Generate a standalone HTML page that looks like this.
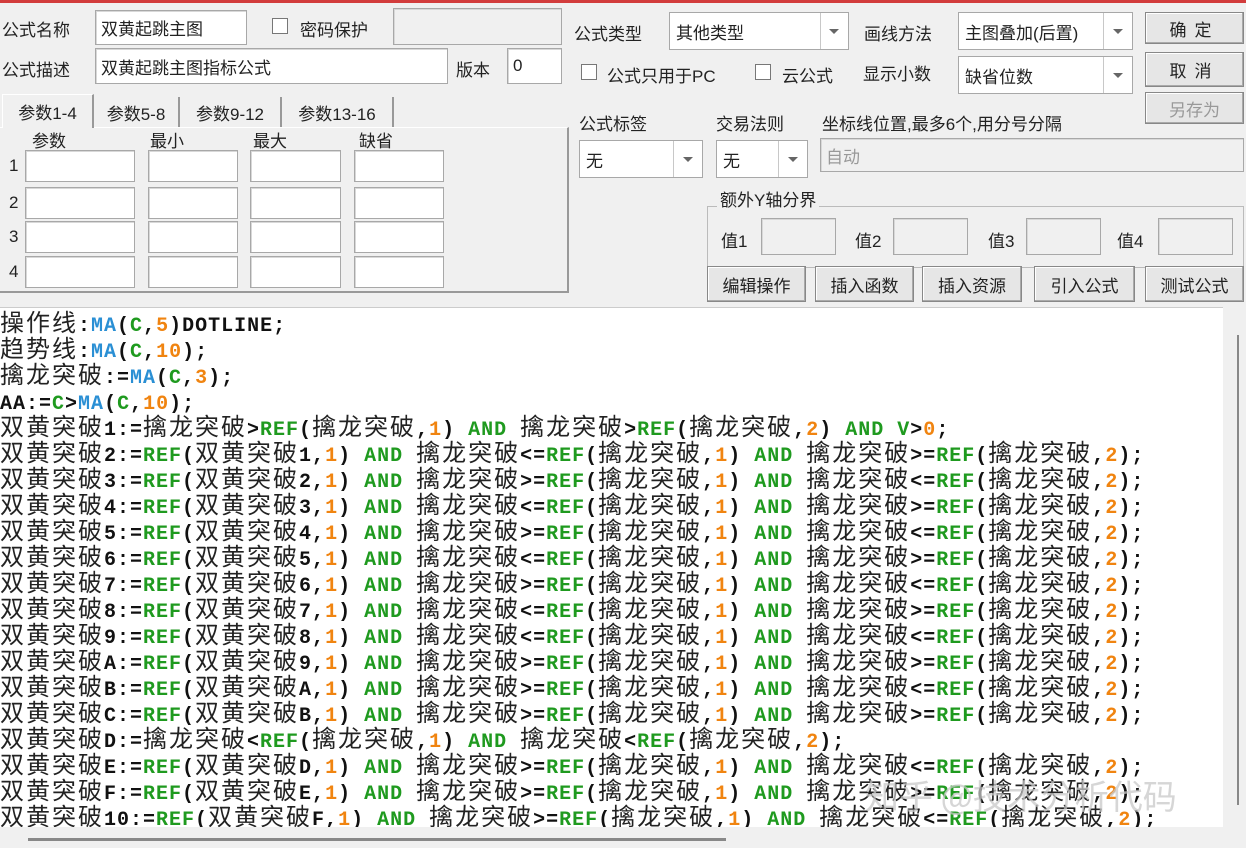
<!DOCTYPE html>
<html><head><meta charset="utf-8"><style>
*{margin:0;padding:0;box-sizing:border-box}
body{width:1246px;height:848px;background:#f0f0f0;position:relative;overflow:hidden;font-family:"Liberation Sans","Noto Sans CJK SC",sans-serif;font-size:17px;color:#222}
.a{position:absolute;white-space:nowrap}
.in{position:absolute;background:#fff;border:1px solid #a8a8a8;box-shadow:inset 1px 1px 0 #d8d8d8;padding-left:5px;line-height:normal;display:flex;align-items:center}
.dis{background:#f0f0f0;color:#999}
.cb{position:absolute;width:16px;height:16px;border:1px solid #777;background:#fff}
.combo{position:absolute;background:#fff;border:1px solid #a8a8a8;display:flex;align-items:center;padding-left:6px}
.combo .sep{position:absolute;top:0;bottom:0;border-left:1px solid #c8c8c8}
.combo .arr{position:absolute;width:0;height:0;border-left:5px solid transparent;border-right:5px solid transparent;border-top:5px solid #666;top:50%;margin-top:-2px}
.btn{position:absolute;background:#e6e6e6;border:1px solid #888;box-shadow:inset -1px -1px 0 #aaa,inset 1px 1px 0 #fff;display:flex;align-items:center;justify-content:center}
.tab{position:absolute;border-right:2px solid #999;height:30px;display:flex;align-items:center;justify-content:center}
#code{position:absolute;left:0;top:307px;width:1223px;height:520px;background:#fff;overflow:hidden;border-top:1px solid #ccc}
.l{height:26px;line-height:26px;white-space:pre;font-family:"Liberation Mono",monospace;font-weight:bold;font-size:20px;letter-spacing:1px;color:#111}
i{font-style:normal;font-family:"Noto Sans CJK SC","WenQuanYi Zen Hei",sans-serif;font-size:24px;font-weight:normal;letter-spacing:2px;color:#222;line-height:26px}
g{color:#1f9a1f}m{color:#2a8fd4}o{color:#f08410}
</style></head><body>
<div class="a" style="left:0;top:0;width:1246px;height:3px;background:#d23c3c"></div>

<div class="a" style="left:2px;top:16px">公式名称</div>
<div class="in" style="left:95px;top:10px;width:152px;height:35px">双黄起跳主图</div>
<div class="cb" style="left:272px;top:18px"></div>
<div class="a" style="left:300px;top:16px">密码保护</div>
<div class="in dis" style="left:393px;top:8px;width:169px;height:37px"></div>
<div class="a" style="left:2px;top:56px">公式描述</div>
<div class="in" style="left:95px;top:48px;width:353px;height:36px">双黄起跳主图指标公式</div>
<div class="a" style="left:456px;top:56px">版本</div>
<div class="in" style="left:507px;top:48px;width:55px;height:36px">0</div>

<div class="a" style="left:0;top:127px;width:569px;height:166px;border-right:2px solid #999;border-bottom:2px solid #999;border-top:1px solid #fff"></div>
<div class="tab" style="left:2px;top:94px;width:92px;height:34px;background:#f0f0f0;border-left:1px solid #fff;border-top:1px solid #fff">参数1-4</div>
<div class="tab" style="left:94px;top:97px;width:86px">参数5-8</div>
<div class="tab" style="left:180px;top:97px;width:102px">参数9-12</div>
<div class="tab" style="left:282px;top:97px;width:112px">参数13-16</div>
<div class="a" style="left:32px;top:127px">参数</div>
<div class="a" style="left:150px;top:127px">最小</div>
<div class="a" style="left:253px;top:127px">最大</div>
<div class="a" style="left:359px;top:127px">缺省</div>
<div class="a" style="left:9px;top:156px">1</div><div class="a" style="left:9px;top:193px">2</div><div class="a" style="left:9px;top:227px">3</div><div class="a" style="left:9px;top:262px">4</div>
<div class="in" style="left:25px;top:150px;width:110px;height:32px"></div><div class="in" style="left:148px;top:150px;width:90px;height:32px"></div><div class="in" style="left:250px;top:150px;width:91px;height:32px"></div><div class="in" style="left:354px;top:150px;width:90px;height:32px"></div>
<div class="in" style="left:25px;top:187px;width:110px;height:32px"></div><div class="in" style="left:148px;top:187px;width:90px;height:32px"></div><div class="in" style="left:250px;top:187px;width:91px;height:32px"></div><div class="in" style="left:354px;top:187px;width:90px;height:32px"></div>
<div class="in" style="left:25px;top:221px;width:110px;height:32px"></div><div class="in" style="left:148px;top:221px;width:90px;height:32px"></div><div class="in" style="left:250px;top:221px;width:91px;height:32px"></div><div class="in" style="left:354px;top:221px;width:90px;height:32px"></div>
<div class="in" style="left:25px;top:256px;width:110px;height:32px"></div><div class="in" style="left:148px;top:256px;width:90px;height:32px"></div><div class="in" style="left:250px;top:256px;width:91px;height:32px"></div><div class="in" style="left:354px;top:256px;width:90px;height:32px"></div>

<div class="a" style="left:574px;top:20px">公式类型</div>
<div class="combo" style="left:669px;top:12px;width:180px;height:38px">其他类型<span class="sep" style="left:150px"></span><span class="arr" style="left:159px"></span></div>
<div class="a" style="left:864px;top:20px">画线方法</div>
<div class="combo" style="left:958px;top:12px;width:175px;height:38px">主图叠加(后置)<span class="sep" style="left:144px"></span><span class="arr" style="left:154px"></span></div>
<div class="btn" style="left:1145px;top:12px;width:99px;height:32px;letter-spacing:8px">确定</div>
<div class="btn" style="left:1145px;top:52px;width:99px;height:35px;letter-spacing:8px">取消</div>
<div class="btn" style="left:1145px;top:92px;width:99px;height:32px;color:#999">另存为</div>
<div class="cb" style="left:581px;top:64px"></div>
<div class="a" style="left:607px;top:62px">公式只用于PC</div>
<div class="cb" style="left:755px;top:64px"></div>
<div class="a" style="left:782px;top:62px">云公式</div>
<div class="a" style="left:863px;top:60px">显示小数</div>
<div class="combo" style="left:958px;top:56px;width:175px;height:38px">缺省位数<span class="sep" style="left:144px"></span><span class="arr" style="left:154px"></span></div>
<div class="a" style="left:579px;top:110px">公式标签</div>
<div class="a" style="left:716px;top:110px">交易法则</div>
<div class="a" style="left:822px;top:110px">坐标线位置,最多6个,用分号分隔</div>
<div class="combo" style="left:579px;top:140px;width:124px;height:38px">无<span class="sep" style="left:93px"></span><span class="arr" style="left:103px"></span></div>
<div class="combo" style="left:716px;top:140px;width:92px;height:38px">无<span class="sep" style="left:61px"></span><span class="arr" style="left:71px"></span></div>
<div class="in dis" style="left:820px;top:138px;width:424px;height:34px">自动</div>
<div class="a" style="left:707px;top:206px;width:537px;height:62px;border:1px solid #bbb"></div>
<div class="a" style="left:717px;top:186px;background:#f0f0f0;padding:0 3px">额外Y轴分界</div>
<div class="a" style="left:721px;top:227px">值1</div><div class="in dis" style="left:761px;top:218px;width:75px;height:37px"></div>
<div class="a" style="left:855px;top:227px">值2</div><div class="in dis" style="left:893px;top:218px;width:75px;height:37px"></div>
<div class="a" style="left:988px;top:227px">值3</div><div class="in dis" style="left:1026px;top:218px;width:75px;height:37px"></div>
<div class="a" style="left:1117px;top:227px">值4</div><div class="in dis" style="left:1158px;top:218px;width:75px;height:37px"></div>
<div class="btn" style="left:707px;top:266px;width:99px;height:36px">编辑操作</div>
<div class="btn" style="left:815px;top:266px;width:99px;height:36px">插入函数</div>
<div class="btn" style="left:922px;top:266px;width:100px;height:36px">插入资源</div>
<div class="btn" style="left:1034px;top:266px;width:101px;height:36px">引入公式</div>
<div class="btn" style="left:1145px;top:266px;width:99px;height:36px">测试公式</div>

<div id="code">
<div class="l"><i>操作线</i>:<m>MA</m>(<g>C</g>,<o>5</o>)DOTLINE;</div>
<div class="l"><i>趋势线</i>:<m>MA</m>(<g>C</g>,<o>10</o>);</div>
<div class="l"><i>擒龙突破</i>:=<m>MA</m>(<g>C</g>,<o>3</o>);</div>
<div class="l"><i>&#8203;</i>AA:=<g>C</g>><m>MA</m>(<g>C</g>,<o>10</o>);</div>
<div class="l"><i>双黄突破</i>1:=<i>擒龙突破</i>><g>REF</g>(<i>擒龙突破</i>,<o>1</o>) <g>AND</g> <i>擒龙突破</i>><g>REF</g>(<i>擒龙突破</i>,<o>2</o>) <g>AND</g> <g>V</g>><o>0</o>;</div>
<div class="l"><i>双黄突破</i>2:=<g>REF</g>(<i>双黄突破</i>1,<o>1</o>) <g>AND</g> <i>擒龙突破</i><=<g>REF</g>(<i>擒龙突破</i>,<o>1</o>) <g>AND</g> <i>擒龙突破</i>>=<g>REF</g>(<i>擒龙突破</i>,<o>2</o>);</div>
<div class="l"><i>双黄突破</i>3:=<g>REF</g>(<i>双黄突破</i>2,<o>1</o>) <g>AND</g> <i>擒龙突破</i>>=<g>REF</g>(<i>擒龙突破</i>,<o>1</o>) <g>AND</g> <i>擒龙突破</i><=<g>REF</g>(<i>擒龙突破</i>,<o>2</o>);</div>
<div class="l"><i>双黄突破</i>4:=<g>REF</g>(<i>双黄突破</i>3,<o>1</o>) <g>AND</g> <i>擒龙突破</i><=<g>REF</g>(<i>擒龙突破</i>,<o>1</o>) <g>AND</g> <i>擒龙突破</i>>=<g>REF</g>(<i>擒龙突破</i>,<o>2</o>);</div>
<div class="l"><i>双黄突破</i>5:=<g>REF</g>(<i>双黄突破</i>4,<o>1</o>) <g>AND</g> <i>擒龙突破</i>>=<g>REF</g>(<i>擒龙突破</i>,<o>1</o>) <g>AND</g> <i>擒龙突破</i><=<g>REF</g>(<i>擒龙突破</i>,<o>2</o>);</div>
<div class="l"><i>双黄突破</i>6:=<g>REF</g>(<i>双黄突破</i>5,<o>1</o>) <g>AND</g> <i>擒龙突破</i><=<g>REF</g>(<i>擒龙突破</i>,<o>1</o>) <g>AND</g> <i>擒龙突破</i>>=<g>REF</g>(<i>擒龙突破</i>,<o>2</o>);</div>
<div class="l"><i>双黄突破</i>7:=<g>REF</g>(<i>双黄突破</i>6,<o>1</o>) <g>AND</g> <i>擒龙突破</i>>=<g>REF</g>(<i>擒龙突破</i>,<o>1</o>) <g>AND</g> <i>擒龙突破</i><=<g>REF</g>(<i>擒龙突破</i>,<o>2</o>);</div>
<div class="l"><i>双黄突破</i>8:=<g>REF</g>(<i>双黄突破</i>7,<o>1</o>) <g>AND</g> <i>擒龙突破</i><=<g>REF</g>(<i>擒龙突破</i>,<o>1</o>) <g>AND</g> <i>擒龙突破</i>>=<g>REF</g>(<i>擒龙突破</i>,<o>2</o>);</div>
<div class="l"><i>双黄突破</i>9:=<g>REF</g>(<i>双黄突破</i>8,<o>1</o>) <g>AND</g> <i>擒龙突破</i><=<g>REF</g>(<i>擒龙突破</i>,<o>1</o>) <g>AND</g> <i>擒龙突破</i><=<g>REF</g>(<i>擒龙突破</i>,<o>2</o>);</div>
<div class="l"><i>双黄突破</i>A:=<g>REF</g>(<i>双黄突破</i>9,<o>1</o>) <g>AND</g> <i>擒龙突破</i>>=<g>REF</g>(<i>擒龙突破</i>,<o>1</o>) <g>AND</g> <i>擒龙突破</i>>=<g>REF</g>(<i>擒龙突破</i>,<o>2</o>);</div>
<div class="l"><i>双黄突破</i>B:=<g>REF</g>(<i>双黄突破</i>A,<o>1</o>) <g>AND</g> <i>擒龙突破</i>>=<g>REF</g>(<i>擒龙突破</i>,<o>1</o>) <g>AND</g> <i>擒龙突破</i><=<g>REF</g>(<i>擒龙突破</i>,<o>2</o>);</div>
<div class="l"><i>双黄突破</i>C:=<g>REF</g>(<i>双黄突破</i>B,<o>1</o>) <g>AND</g> <i>擒龙突破</i>>=<g>REF</g>(<i>擒龙突破</i>,<o>1</o>) <g>AND</g> <i>擒龙突破</i>>=<g>REF</g>(<i>擒龙突破</i>,<o>2</o>);</div>
<div class="l"><i>双黄突破</i>D:=<i>擒龙突破</i><<g>REF</g>(<i>擒龙突破</i>,<o>1</o>) <g>AND</g> <i>擒龙突破</i><<g>REF</g>(<i>擒龙突破</i>,<o>2</o>);</div>
<div class="l"><i>双黄突破</i>E:=<g>REF</g>(<i>双黄突破</i>D,<o>1</o>) <g>AND</g> <i>擒龙突破</i>>=<g>REF</g>(<i>擒龙突破</i>,<o>1</o>) <g>AND</g> <i>擒龙突破</i><=<g>REF</g>(<i>擒龙突破</i>,<o>2</o>);</div>
<div class="l"><i>双黄突破</i>F:=<g>REF</g>(<i>双黄突破</i>E,<o>1</o>) <g>AND</g> <i>擒龙突破</i>>=<g>REF</g>(<i>擒龙突破</i>,<o>1</o>) <g>AND</g> <i>擒龙突破</i>>=<g>REF</g>(<i>擒龙突破</i>,<o>2</o>);</div>
<div class="l"><i>双黄突破</i>10:=<g>REF</g>(<i>双黄突破</i>F,<o>1</o>) <g>AND</g> <i>擒龙突破</i>>=<g>REF</g>(<i>擒龙突破</i>,<o>1</o>) <g>AND</g> <i>擒龙突破</i><=<g>REF</g>(<i>擒龙突破</i>,<o>2</o>);</div>
<div class="a" style="left:865px;top:462px;font-family:'Noto Sans CJK SC',sans-serif;font-size:34px;color:rgba(200,200,200,0.75)">知乎 @技术分析代码</div>
</div>
<div class="a" style="left:1237px;top:335px;width:2px;height:470px;background:#888"></div>
<div class="a" style="left:28px;top:838px;width:698px;height:3px;background:#888"></div>
</body></html>
